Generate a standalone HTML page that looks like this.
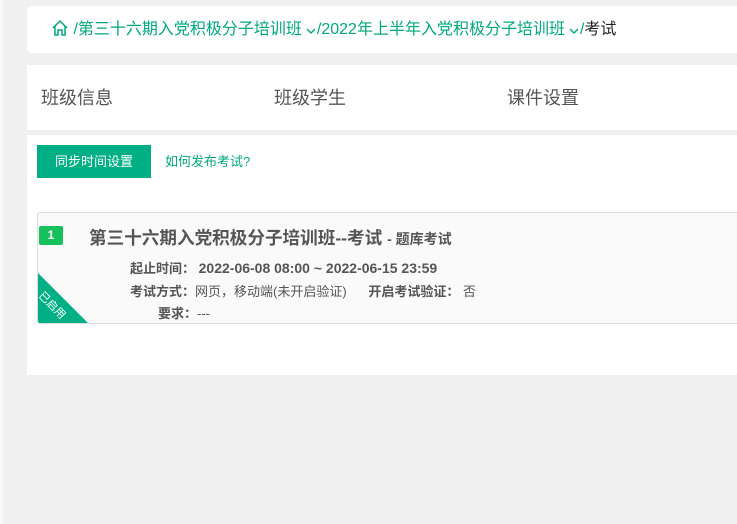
<!DOCTYPE html>
<html><head><meta charset="utf-8"><style>
*{margin:0;padding:0;box-sizing:border-box}
body{width:737px;height:524px;background:#f0f0f0;font-family:"Liberation Sans","Noto Sans CJK SC",sans-serif;position:relative;overflow:hidden}
.left{position:absolute;left:0;top:0;width:3px;height:524px;background:#f7f7f7}
.bc{position:absolute;left:27px;top:6px;width:720px;height:47px;background:#fff;border-radius:5px;font-size:16px;color:#00a87e;line-height:47px;padding-left:24px;white-space:nowrap}
.bc .cur{color:#222}
.chev{vertical-align:-1px;margin:0 1px 0 4px}
.tabs{position:absolute;left:27px;top:65px;width:720px;height:65px;background:#fff;font-size:18px;color:#555;line-height:66px}
.tabs span{position:absolute}
.main{position:absolute;left:27px;top:135px;width:720px;height:240px;background:#fff}
.btn{position:absolute;left:10px;top:10px;width:114px;height:33px;background:#00b084;color:#fff;font-size:13px;line-height:33px;text-align:center}
.how{position:absolute;left:138px;top:10px;line-height:33px;font-size:13px;color:#00a87e}
.card{position:absolute;left:10px;top:77px;width:720px;height:112px;background:#fafafa;border:1px solid #ddd;border-radius:3px;overflow:hidden}
.num{position:absolute;left:1px;top:13px;width:24px;height:19px;background:#16c05a;border-radius:2px;color:#fff;font-size:12px;font-weight:bold;text-align:center;line-height:19px}
.tri{position:absolute;left:0;bottom:0;width:0;height:0;border-left:50px solid #00b084;border-top:50px solid transparent}
.tri-t{position:absolute;left:-2px;bottom:10px;color:#fff;font-size:11px;transform:rotate(45deg);white-space:nowrap}
.title{position:absolute;left:51px;top:12px;font-size:17.6px;font-weight:bold;color:#555;white-space:nowrap}
.title small{font-size:14px;font-weight:bold;color:#555}
.row{position:absolute;font-size:13px;color:#555;white-space:nowrap}
.row b{color:#555}
</style></head><body>
<div class="left"></div>
<div class="bc"><svg width="18" height="18" viewBox="0 0 18 18" style="vertical-align:-3px"><path d="M2 9 L9 2 L16 9 M4 7 V16 H7 V11 H11 V16 H14 V7" fill="none" stroke="#00a87e" stroke-width="1.5"/></svg> /第三十六期入党积极分子培训班<svg class="chev" width="10" height="8" viewBox="0 0 10 8"><path d="M1 2 L5 6 L9 2" fill="none" stroke="#00a87e" stroke-width="1.4"/></svg>/2022年上半年入党积极分子培训班<svg class="chev" width="10" height="8" viewBox="0 0 10 8"><path d="M1 2 L5 6 L9 2" fill="none" stroke="#00a87e" stroke-width="1.4"/></svg>/<span class="cur">考试</span></div>
<div class="tabs"><span style="left:14px">班级信息</span><span style="left:247px">班级学生</span><span style="left:480px">课件设置</span></div>
<div class="main">
<div class="btn">同步时间设置</div>
<div class="how">如何发布考试?</div>
<div class="card">
<div class="num">1</div>
<div class="tri"></div><div class="tri-t">已启用</div>
<div class="title">第三十六期入党积极分子培训班--考试 <small>- 题库考试</small></div>
<div class="row" style="left:92px;top:45px"><b>起止时间：</b> <b style="font-size:14px">2022-06-08 08:00 ~ 2022-06-15 23:59</b></div>
<div class="row" style="left:92px;top:68px"><b>考试方式：</b>网页，移动端(未开启验证) &nbsp;&nbsp;&nbsp;&nbsp;&nbsp;<b>开启考试验证：</b> 否</div>
<div class="row" style="left:120px;top:90px"><b>要求：</b>---</div>
</div>
</div>
</body></html>
